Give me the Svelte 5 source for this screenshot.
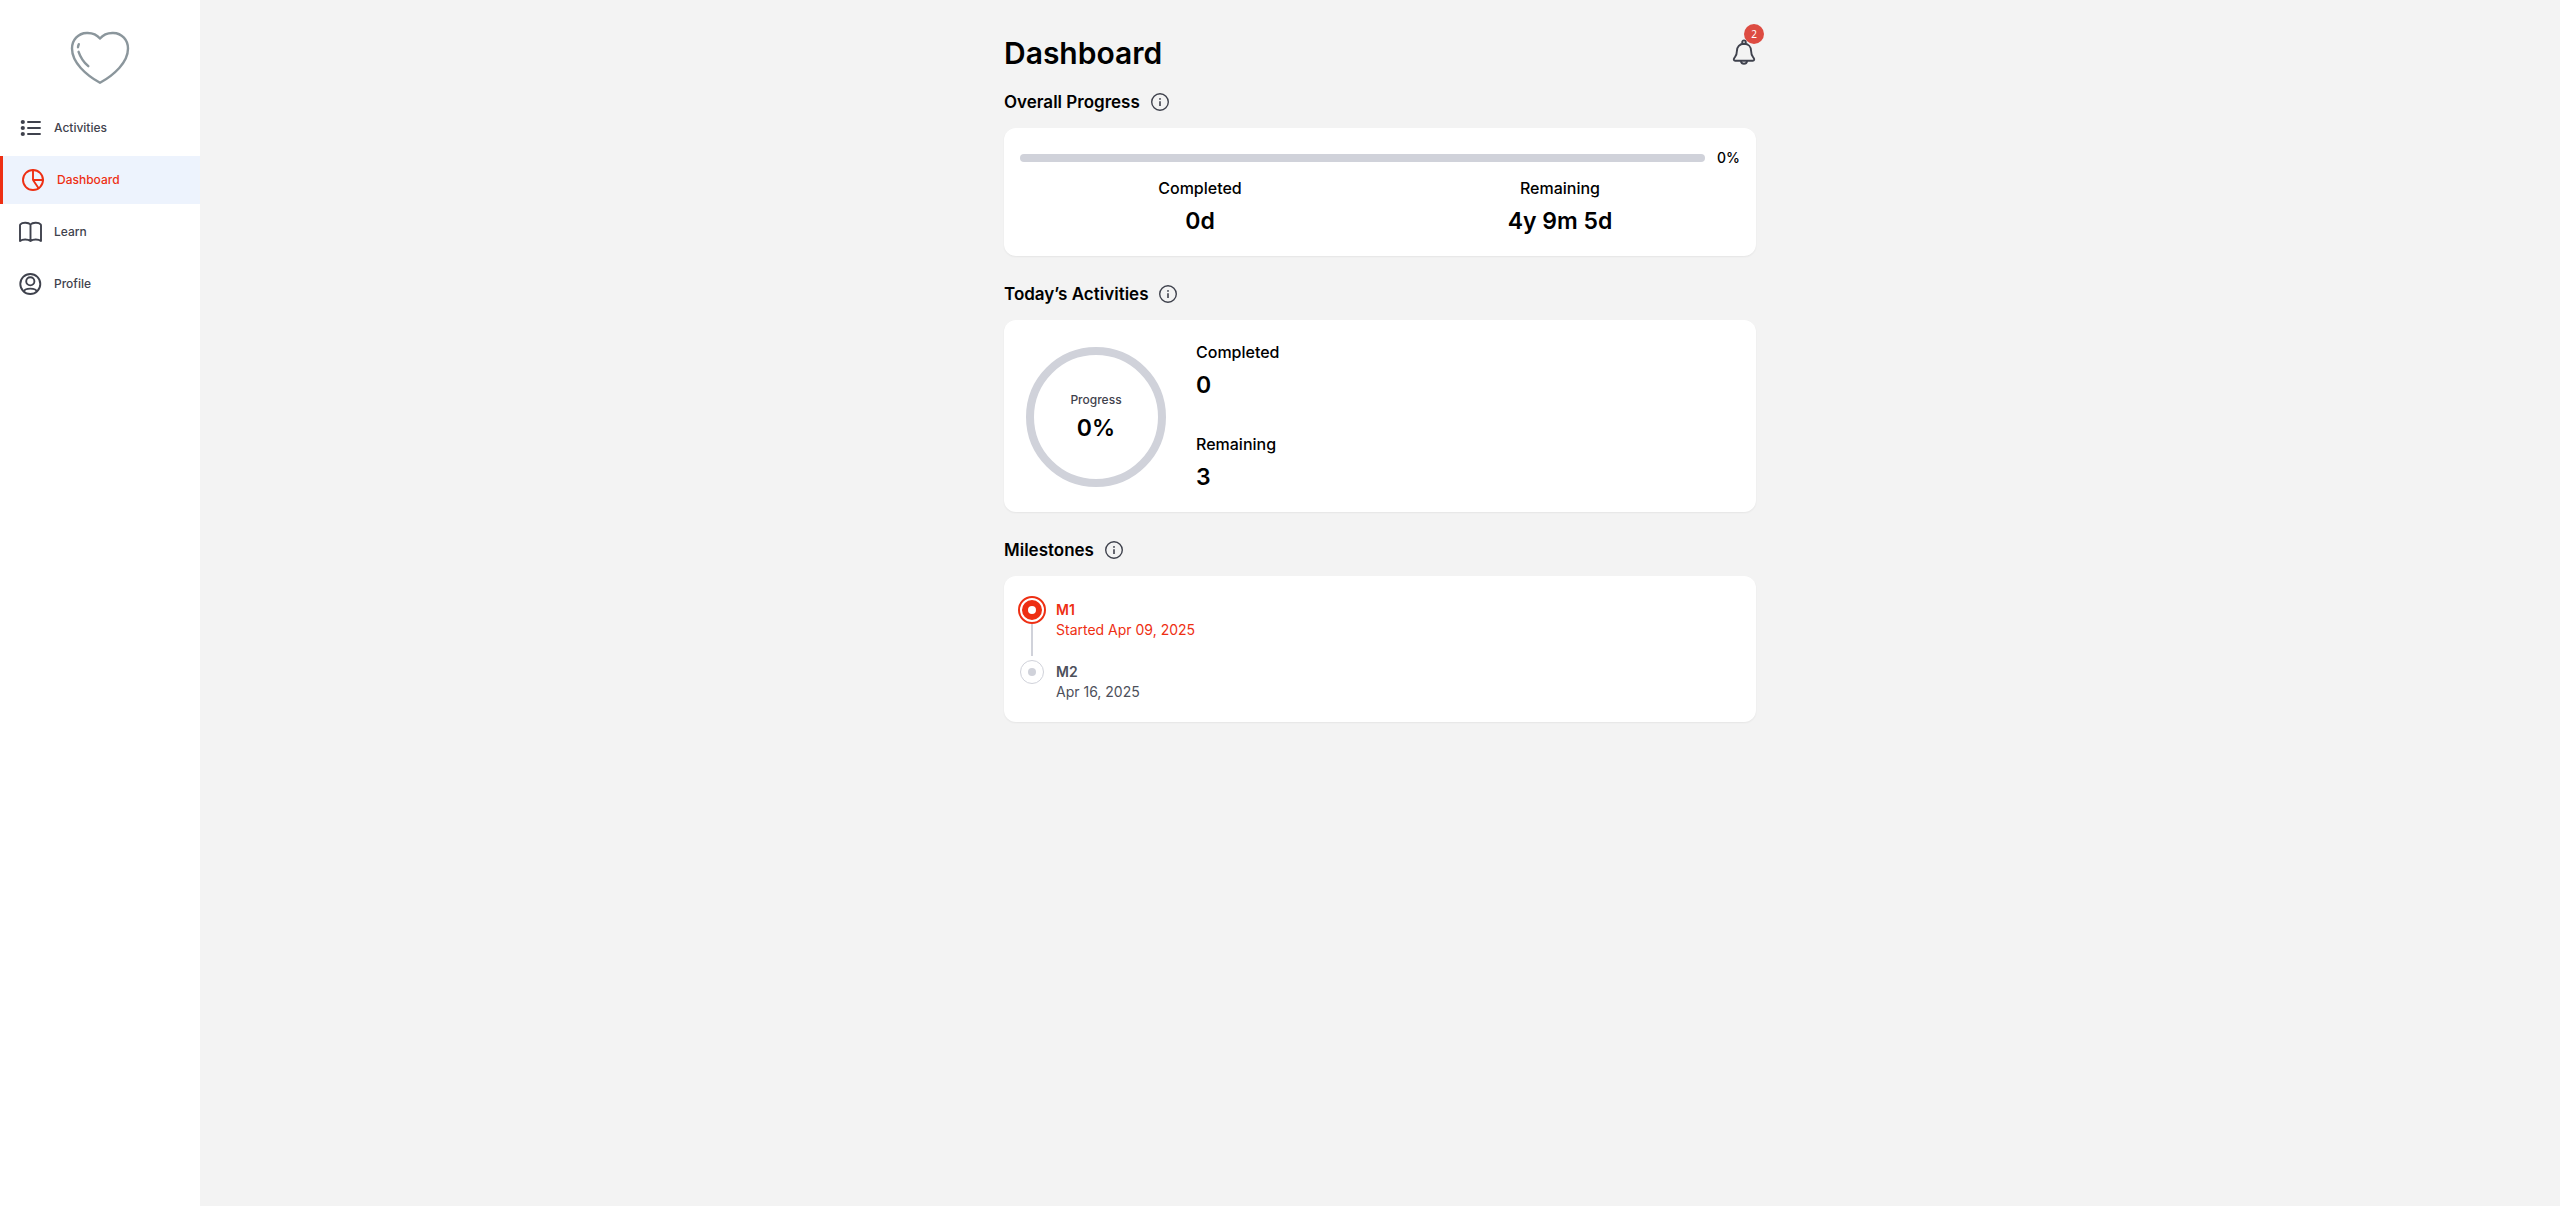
<script>
  const nav = [
    { id: 'activities', label: 'Activities' },
    { id: 'dashboard', label: 'Dashboard' },
    { id: 'learn', label: 'Learn' },
    { id: 'profile', label: 'Profile' },
  ];
  const current = 'dashboard';
  const overall = 0;
  const milestones = [
    { name: 'M1', date: 'Started Apr 09, 2025', active: true },
    { name: 'M2', date: 'Apr 16, 2025', active: false },
  ];
</script>

{#snippet heading(id, text)}
  <div class="heading">
    <h2 {id}>{text}</h2>
    <button type="button" class="plain" aria-label="About {text}">
      <svg width="20" height="20" viewBox="0 0 20 20" fill="none" stroke="currentColor">
        <circle cx="10" cy="10" r="8.3" stroke-width="1.4" />
        <path d="M10 9.2V14" stroke-width="1.6" />
        <circle cx="10" cy="6.9" r="0.95" fill="currentColor" stroke="none" />
      </svg>
    </button>
  </div>
{/snippet}

<div class="app">
  <aside>
    <a class="logo" href="#home" aria-label="Home">
      <svg width="60" height="54" viewBox="0 0 60 54" fill="none" stroke="#8b969c" stroke-width="2.4" stroke-linecap="round" stroke-linejoin="round">
        <path d="M30 7.6C26.8 3.6 21.8 1.8 16.8 2C8 2.2 2 9 2 17.5C2 31.5 16 44 30 51.8C44 44 58 31.5 58 17.5C58 9 52 2.2 43.2 2C38.2 1.8 33.2 3.6 30 7.6Z" />
        <path d="M8.8 13.2Q8.2 14.6 8 16.2M8.6 20.8C10.5 26.5 14 31.5 18.3 35.2" />
      </svg>
    </a>
    <nav>
      {#each nav as item}
        <a href="#{item.id}" class:active={item.id === current} aria-current={item.id === current ? 'page' : undefined}>
          <svg width="24" height="24" viewBox="0 0 24 24" fill="none" stroke="currentColor" stroke-width="1.9" stroke-linecap="round" stroke-linejoin="round">
            {#if item.id === 'activities'}
              <path d="M10 6H22M10 12H22M10 18H22" />
              <g fill="currentColor" stroke="none">
                <circle cx="4.8" cy="6" r="2.1" /><circle cx="4.8" cy="12" r="2.1" /><circle cx="4.8" cy="18" r="2.1" />
              </g>
            {:else if item.id === 'dashboard'}
              <circle cx="12" cy="12" r="10" />
              <path d="M12 2V12H22M12 12L17.6 20.2" />
            {:else if item.id === 'learn'}
              <path d="M12.5 4.5C10.6 2.3 4.4 2 2.4 4.3C2.1 4.7 2 5 2 5.4V21C4.6 19 9.8 19 12.5 21C15.2 19 20.4 19 23 21V5.4C23 5 22.9 4.7 22.6 4.3C20.6 2 14.4 2.3 12.5 4.5ZM12.5 4.5V21" />
            {:else}
              <circle cx="12.3" cy="12" r="10" />
              <circle cx="12.3" cy="9.3" r="4.1" />
              <path d="M5.9 19.4C6.3 17.4 7.9 16.6 12.3 16.6S18.3 17.4 18.7 19.4" />
            {/if}
          </svg>
          <span>{item.label}</span>
        </a>
      {/each}
    </nav>
  </aside>

  <main>
    <header>
      <h1>Dashboard</h1>
      <button type="button" class="plain bell" aria-label="Notifications, 2 unread">
        <svg width="24" height="26" viewBox="0 0 24 26" fill="none" stroke="currentColor" stroke-width="1.9" stroke-linejoin="round">
          <circle cx="12" cy="3.2" r="1.8" />
          <path d="M12 4.8C7.6 4.8 4.9 8 4.9 12C4.9 16.4 3.4 17.4 2.2 19.2C1.4 20.6 1.8 21.7 3.2 21.7H20.8C22.2 21.7 22.6 20.6 21.8 19.2C20.6 17.4 19.1 16.4 19.1 12C19.1 8 16.4 4.8 12 4.8Z" />
          <path d="M8.8 22C9.2 23.9 10.4 24.8 12 24.8S14.8 23.9 15.2 22" />
        </svg>
        <span class="badge">2</span>
      </button>
    </header>

    <section aria-labelledby="overall">
      {@render heading('overall', 'Overall Progress')}
      <div class="card overall">
        <div class="bar-row">
          <div class="bar" role="progressbar" aria-label="Overall progress" aria-valuenow={overall} aria-valuemin="0" aria-valuemax="100">
            <div class="fill" style="width: {overall}%"></div>
          </div>
          <span>{overall}%</span>
        </div>
        <dl class="halves">
          <div class="stat"><dt>Completed</dt><dd>0d</dd></div>
          <div class="stat"><dt>Remaining</dt><dd>4y 9m 5d</dd></div>
        </dl>
      </div>
    </section>

    <section aria-labelledby="today">
      {@render heading('today', 'Today’s Activities')}
      <div class="card today">
        <div class="ring">
          <span>Progress</span>
          <strong>0%</strong>
        </div>
        <dl class="stack">
          <div class="stat"><dt>Completed</dt><dd>0</dd></div>
          <div class="stat"><dt>Remaining</dt><dd>3</dd></div>
        </dl>
      </div>
    </section>

    <section aria-labelledby="milestones">
      {@render heading('milestones', 'Milestones')}
      <ol class="card milestones">
        {#each milestones as m}
          <li class:current={m.active}>
            <div class="track">
              <svg width="28" height="28" viewBox="0 0 28 28" fill="none">
                {#if m.active}
                  <circle cx="14" cy="14" r="13" stroke="#ee2f13" stroke-width="2" />
                  <circle cx="14" cy="14" r="7" stroke="#ee2f13" stroke-width="6" />
                {:else}
                  <circle cx="14" cy="14" r="11.5" stroke="#d0d2da" />
                  <circle cx="14" cy="14" r="4" fill="#d0d2da" />
                {/if}
              </svg>
            </div>
            <div class="info">
              <h3>{m.name}</h3>
              <p>{m.date}</p>
            </div>
          </li>
        {/each}
      </ol>
    </section>
  </main>
</div>

<style>
  :global(body) {
    margin: 0;
    background: #f3f3f3;
  }
  .app {
    display: flex;
    min-height: 100vh;
    font-family: Inter, 'Liberation Sans', sans-serif;
    color: #000;
  }
  h1, h2, h3, p, dl, dd, ol {
    margin: 0;
    padding: 0;
  }
  svg {
    display: block;
    flex: none;
  }
  aside {
    flex: none;
    width: 200px;
    background: #fff;
  }
  .logo {
    display: flex;
    justify-content: center;
    padding: 31px 0 19px;
  }
  nav {
    display: flex;
    flex-direction: column;
    gap: 4px;
  }
  nav a {
    display: flex;
    align-items: center;
    gap: 12px;
    height: 48px;
    padding-left: 18px;
    color: #3f424d;
    font-size: 12px;
    line-height: 16px;
    font-weight: 500;
    text-decoration: none;
  }
  nav a.active {
    border-left: 3px solid #ee2f13;
    background: #edf3fd;
    color: #ee2f13;
  }
  main {
    flex: 1;
    box-sizing: border-box;
    max-width: 784px;
    margin: 0 auto;
    padding: 32px 16px;
  }
  header {
    display: flex;
    align-items: flex-start;
    justify-content: space-between;
    margin-bottom: 16px;
  }
  h1 {
    font-size: 30px;
    line-height: 42px;
    font-weight: 600;
  }
  .plain {
    padding: 0;
    border: 0;
    background: none;
    color: #3f424d;
    cursor: pointer;
  }
  .bell {
    position: relative;
    margin-top: 7px;
  }
  .badge {
    position: absolute;
    top: -15px;
    right: -8px;
    width: 20px;
    height: 20px;
    border-radius: 50%;
    background: #dd4b41;
    color: #fff;
    font-family: 'Noto Sans', sans-serif;
    font-size: 10px;
    line-height: 20px;
    text-align: center;
  }
  section + section {
    margin-top: 26px;
  }
  .heading {
    display: flex;
    align-items: center;
    gap: 10px;
    margin-bottom: 14px;
  }
  h2 {
    font-size: 17px;
    line-height: 24px;
    font-weight: 600;
  }
  .card {
    padding: 16px;
    border-radius: 12px;
    background: #fff;
    box-shadow: 0 1px 2px rgba(0, 0, 0, 0.06);
  }
  .overall {
    padding-bottom: 18px;
  }
  .bar-row {
    display: flex;
    align-items: center;
    gap: 12px;
    margin-bottom: 4px;
    font-size: 14px;
    line-height: 28px;
    font-weight: 500;
  }
  .bar {
    flex: 1;
    height: 8px;
    border-radius: 4px;
    background: #d0d2da;
    overflow: hidden;
  }
  .fill {
    height: 100%;
    background: #ee2f13;
  }
  .halves {
    display: grid;
    grid-template-columns: 1fr 1fr;
    text-align: center;
  }
  .stat {
    display: grid;
    gap: 4px;
  }
  dt {
    font-size: 16px;
    line-height: 24px;
    font-weight: 500;
  }
  dd, .ring strong {
    font-size: 23px;
    line-height: 34px;
    font-weight: 600;
  }
  .today {
    display: flex;
    align-items: center;
    gap: 30px;
    padding: 20px 22px 18px;
  }
  .ring {
    display: flex;
    flex-direction: column;
    align-items: center;
    justify-content: center;
    gap: 3px;
    box-sizing: border-box;
    width: 140px;
    height: 140px;
    padding-top: 3px;
    border: 8px solid #d0d2da;
    border-radius: 50%;
  }
  .ring span {
    color: #3f424d;
    font-size: 12px;
    line-height: 16px;
    font-weight: 500;
  }
  .stack {
    display: grid;
    gap: 30px;
  }
  .milestones {
    padding: 20px 14px;
    list-style: none;
  }
  li {
    display: flex;
    gap: 10px;
    color: #4d505b;
  }
  li.current {
    color: #ee2f13;
  }
  .track {
    display: flex;
    flex-direction: column;
  }
  li:not(:last-child) .track::after {
    content: '';
    width: 2px;
    height: 32px;
    margin: 0 auto 2px;
    background: #d0d2da;
  }
  .info {
    padding-top: 4px;
    font-size: 14px;
    line-height: 20px;
  }
  h3 {
    font-size: 14px;
    font-weight: 600;
  }
</style>
